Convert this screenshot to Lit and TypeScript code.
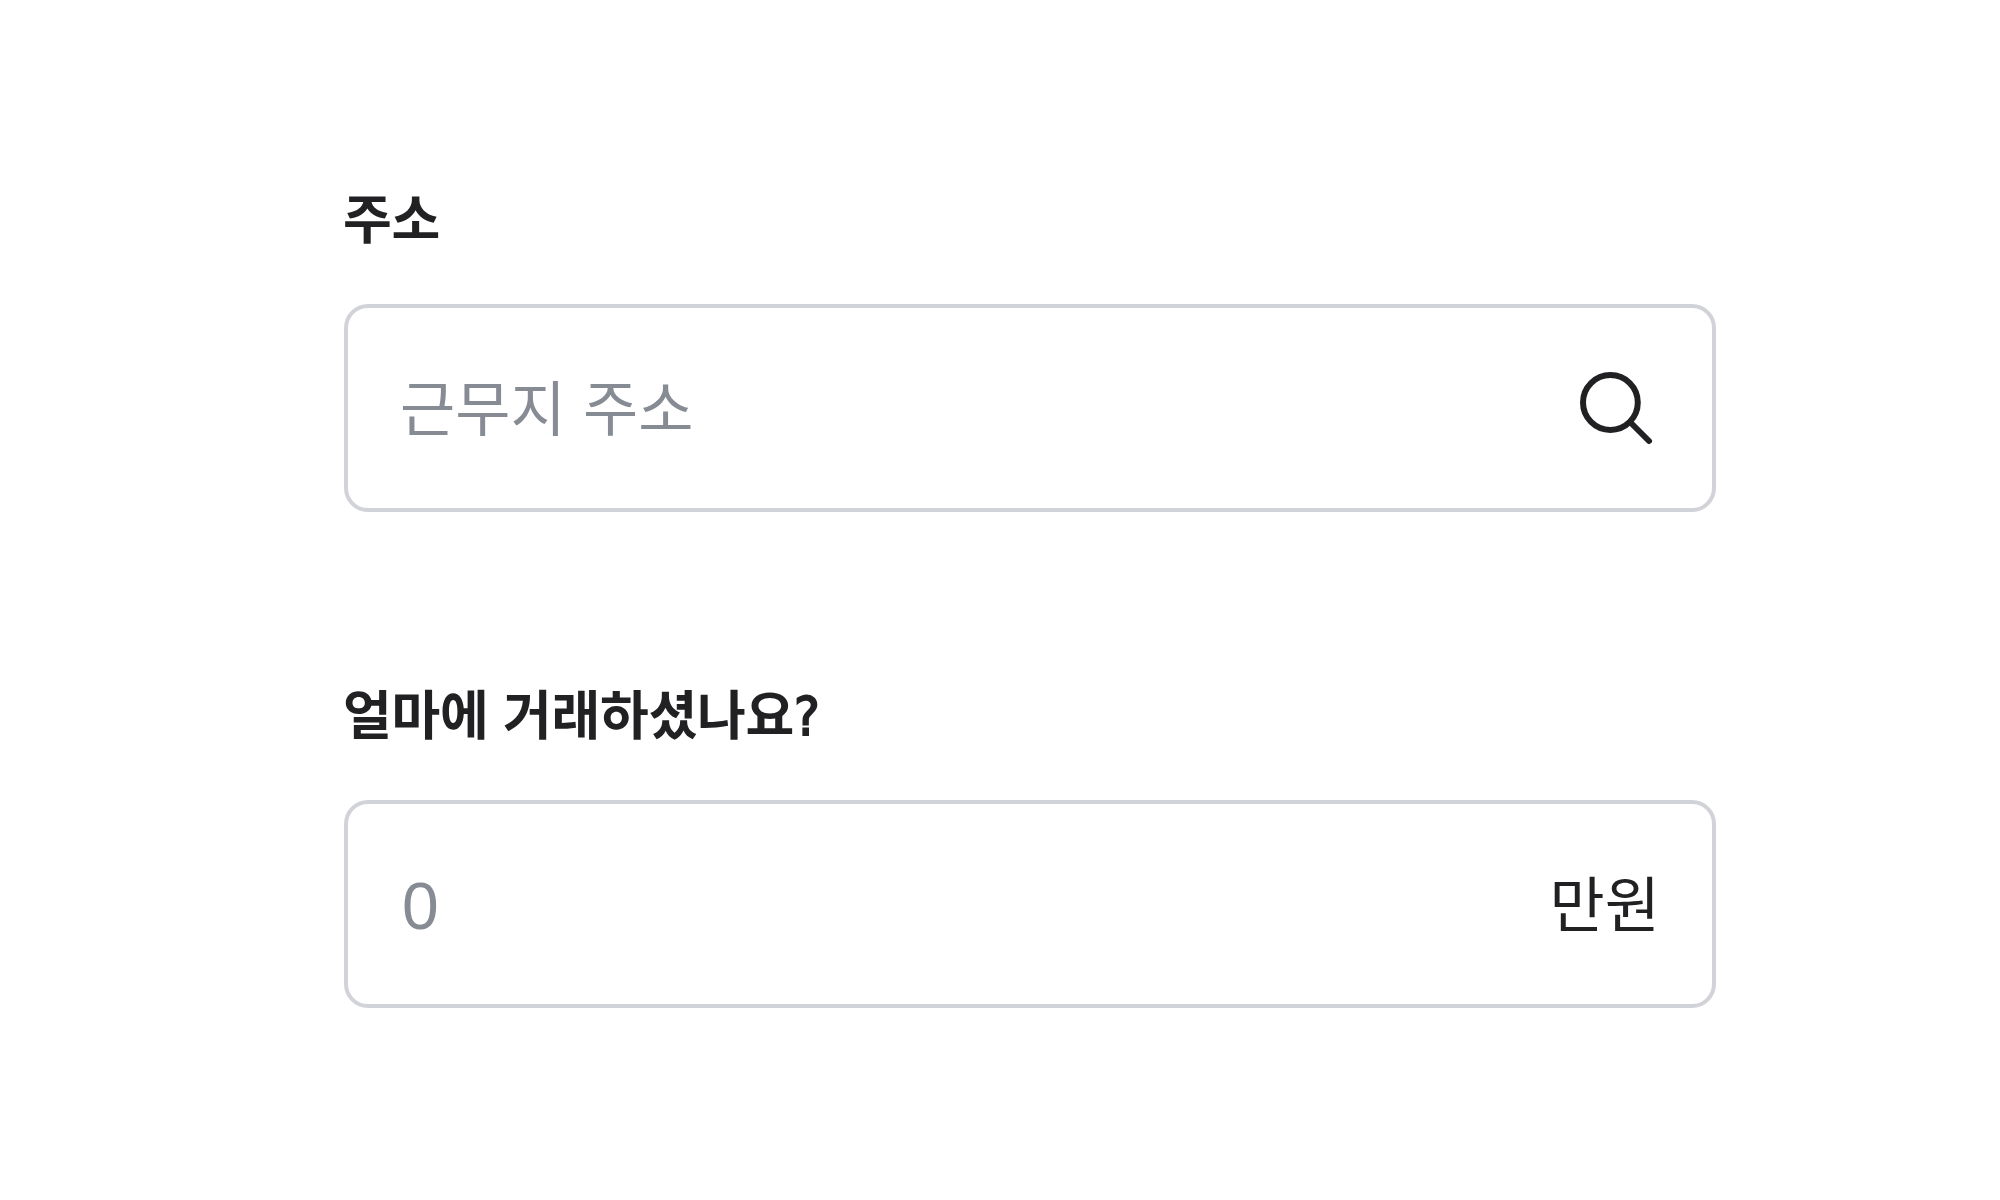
import { LitElement, html, css } from "lit";
import { customElement } from "lit/decorators.js";

@customElement("app-root")
class AppRoot extends LitElement {
  static styles = css`
    :host { display: block; height: 1200px; background: #fff; font-family: "Noto Sans CJK KR", sans-serif; }
    .form { box-sizing: border-box; width: 1372px; margin-left: 344px; padding-top: 176px; }
    .field + .field { margin-top: 160px; }
    .label { display: block; height: 80px; margin-left: -1px; line-height: 80px; font-size: 53px; font-weight: 700; letter-spacing: -0.3px; word-spacing: 3px; color: #212124; white-space: nowrap; }
    .mark { font-family: "DejaVu Sans Condensed", "DejaVu Sans", sans-serif; font-stretch: condensed; font-size: 54px; font-weight: 400; line-height: 1; -webkit-text-stroke: 1.8px #212124; }
    .box { box-sizing: border-box; display: flex; align-items: center; justify-content: space-between; height: 208px; margin-top: 48px; padding: 0 52px; border: 4px solid #d1d3d8; border-radius: 24px; font-size: 60px; line-height: 80px; white-space: nowrap; }
    .hint { color: #868b94; padding-bottom: 6px; word-spacing: 4px; }
    .digits { font-family: "Liberation Sans", sans-serif; font-size: 66px; padding: 3px 0 0 2px; }
    .unit { color: #212124; padding-bottom: 7px; }
    .icon { display: block; width: 76px; height: 76px; margin-right: 2px; overflow: visible; }
  `;
  render() {
    return html`<main class="form">
      <section class="field">
        <span class="label">주소</span>
        <div class="box"><span class="hint">근무지 주소</span>
          <svg class="icon" viewBox="0 0 76 76" fill="none" stroke="#212124" stroke-width="6" stroke-linecap="round"><circle cx="28.4" cy="32.5" r="27.4"/><path d="M49 53L67 71"/></svg>
        </div>
      </section>
      <section class="field">
        <span class="label">얼마에 거래하셨나요<span class="mark">?</span></span>
        <div class="box"><span class="hint digits">0</span><span class="unit">만원</span></div>
      </section>
    </main>`;
  }
}
